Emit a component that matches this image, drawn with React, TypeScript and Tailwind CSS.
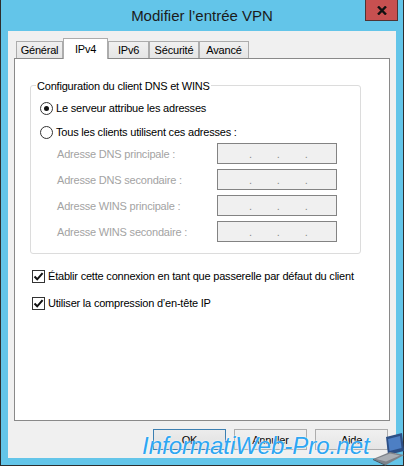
import React from 'react';

const font = "font-['Liberation_Sans',Arial,sans-serif]";

function Tab({ label, width, active }: { label: string; width: number; active?: boolean }) {
  if (active) {
    return (
      <div
        style={{ width }}
        className="h-[21px] bg-white border border-b-0 border-[#acacac] flex justify-center pt-[3px] text-black"
      >
        {label}
      </div>
    );
  }
  return (
    <div
      style={{ width }}
      className="h-[17px] mb-[1px] bg-gradient-to-b from-[#f0f0f0] to-[#e5e5e5] border border-b-0 border-[#acacac] flex justify-center pt-[1px] text-black"
    >
      {label}
    </div>
  );
}

function Radio({ checked, label }: { checked?: boolean; label: string }) {
  return (
    <div className="h-[22px] flex items-center pl-[9px] gap-[3px]">
      <span className="w-[13px] h-[13px] rounded-full border border-[#333] bg-white flex items-center justify-center">
        {checked && <span className="w-[5px] h-[5px] rounded-full bg-[#111]" />}
      </span>
      <span className="text-black">{label}</span>
    </div>
  );
}

function IpRow({ label }: { label: string }) {
  return (
    <div className="h-[21px] flex items-center pl-[26px]">
      <span className="w-[160px] text-[#a3a3a3]">{label}</span>
      <div className="w-[120px] h-[21px] border border-[#838383] bg-[#f0f0f0] flex items-center pl-[31px] gap-[25px] text-[#8a8a8a]">
        <span>.</span>
        <span>.</span>
        <span>.</span>
      </div>
    </div>
  );
}

function Check({ label }: { label: string }) {
  return (
    <div className="h-[20px] flex items-center pl-[17px] gap-[3px]">
      <span className="w-[13px] h-[13px] border border-[#333] bg-white flex items-center justify-center">
        <svg width="11" height="11" viewBox="0 0 11 11">
          <path d="M1.5 5.5 L4.2 8.3 L9.6 2.2" fill="none" stroke="#111" strokeWidth="2" />
        </svg>
      </span>
      <span className="text-black">{label}</span>
    </div>
  );
}

function Btn({ label, def }: { label: string; def?: boolean }) {
  return (
    <div
      className={
        def
          ? 'w-[73px] h-[21px] border border-[#3c7fb1] bg-gradient-to-b from-[#ececec] to-[#e0e0e0] flex items-center justify-center text-black'
          : 'w-[73px] h-[21px] border border-[#adadad] bg-gradient-to-b from-[#f0f0f0] to-[#e5e5e5] flex items-center justify-center text-black'
      }
    >
      {label}
    </div>
  );
}

function Laptop() {
  return (
    <svg width="32" height="34" viewBox="0 0 32 34">
      <polygon points="13,5 29,1 31,19 15,23" fill="#2c4f86" />
      <polygon points="15,7 27,4 28.5,16 16.5,19" fill="#4d7fc4" />
      <polygon points="0,27 17,20 31,23 13,33" fill="#7d8289" />
      <polygon points="3,27 17,21.5 27,23.5 13,29.5" fill="#a9aeb4" />
      <polygon points="0,27 13,33 13,34 0,28" fill="#4b4f56" />
    </svg>
  );
}

export default function App() {
  return (
    <div className={`${font} text-[11px] leading-[14px] tracking-[-0.2px] relative w-[404px] h-[466px] bg-[#63c5e9] border-x border-b border-[#2d2d2d] flex flex-col`}>
      {/* title bar */}
      <div className="h-[31px] grid grid-cols-[1fr_auto_1fr]">
        <div />
        <div className="flex items-center text-[15px] tracking-normal text-[#1b1b1b]">Modifier l’entrée VPN</div>
        <div className="flex justify-end items-start pr-[5px]">
          <div className="w-[33px] h-[21px] bg-[#c75050] border border-t-0 border-[#4f3434] flex items-center justify-center">
            <svg width="10" height="9" viewBox="0 0 10 9">
              <path d="M1 0.5 L9 8.5 M9 0.5 L1 8.5" stroke="#111" strokeWidth="2.4" />
            </svg>
          </div>
        </div>
      </div>

      {/* client area */}
      <div className="flex-1 mx-[7px] mb-[7px] bg-[#f0f0f0] flex flex-col pt-[7px] px-[6px]">
        <div className="flex items-end pl-[2px] relative z-10 -mb-px">
          <Tab label="Général" width={47} />
          <Tab label="IPv4" width={45} active />
          <Tab label="IPv6" width={41} />
          <Tab label="Sécurité" width={50} />
          <Tab label="Avancé" width={50} />
        </div>

        <div className="flex-1 bg-white border border-[#898989] flex flex-col">
          <div className="relative mt-[26px] ml-[15px] w-[331px] h-[169px] border border-[#dcdcdc] rounded-[3px] flex flex-col pt-[11px]">
            <span className="absolute left-[5px] top-[-7px] px-[1px] bg-white text-black">
              Configuration du client DNS et WINS
            </span>
            <Radio checked label="Le serveur attribue les adresses" />
            <div className="mt-[2px]">
              <Radio label="Tous les clients utilisent ces adresses :" />
            </div>
            <div className="flex flex-col gap-[5px]">
              <IpRow label="Adresse DNS principale :" />
              <IpRow label="Adresse DNS secondaire :" />
              <IpRow label="Adresse WINS principale :" />
              <IpRow label="Adresse WINS secondaire :" />
            </div>
          </div>

          <div className="mt-[12px] flex flex-col gap-[7px]">
            <Check label="Établir cette connexion en tant que passerelle par défaut du client" />
            <Check label="Utiliser la compression d’en-tête IP" />
          </div>
        </div>

        <div className="mt-[8px] mb-[8px] flex justify-end gap-[8px] pr-[2px]">
          <Btn label="OK" def />
          <Btn label="Annuler" />
          <Btn label="Aide" />
        </div>
      </div>

      {/* watermark */}
      <div className="absolute left-[141px] top-[434px] text-[24px] leading-[24px] italic tracking-normal text-[#2ea6f2] [text-shadow:0_0_2px_#ffffff,0_0_1px_#ffffff]">
        InformatiWeb-Pro.net
      </div>
      <div className="absolute left-[372px] top-[432px]">
        <Laptop />
      </div>
    </div>
  );
}
